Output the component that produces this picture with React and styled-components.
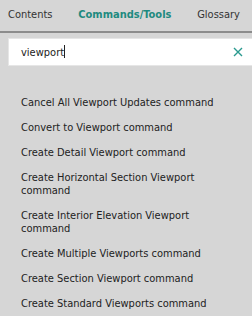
import React from "react";
import styled, { createGlobalStyle } from "styled-components";

const GlobalStyle = createGlobalStyle`
  html, body {
    margin: 0;
    padding: 0;
    background: #d6d6d6;
  }
  body {
    font-family: "DejaVu Sans Condensed", "DejaVu Sans", Verdana, sans-serif;
    overflow: hidden;
  }
`;

const Panel = styled.div`
  width: 252px;
  height: 316px;
  background: #d6d6d6;
  overflow: hidden;
`;

const TabBar = styled.div`
  display: flex;
  align-items: center;
  justify-content: space-between;
  height: 28px;
  padding: 0 12px 3px 8px;
  border-bottom: 2px solid #8c8c8c;
`;

const Tab = styled.div`
  font-size: 11px;
  color: ${(p) => (p.active ? "#1f8a80" : "#333")};
  font-weight: ${(p) => (p.active ? "bold" : "normal")};
`;

const SearchBox = styled.div`
  display: flex;
  align-items: center;
  margin: 5px 0 0 8px;
  height: 26px;
  background: #fff;
  border: 1px solid #e6e6e6;
  border-right: none;
  padding: 0 9px 0 12px;
`;

const SearchText = styled.div`
  flex: 1;
  font-size: 11px;
  color: #222;
`;

const Caret = styled.span`
  display: inline-block;
  width: 1px;
  height: 13px;
  background: #222;
  vertical-align: -2px;
`;

const List = styled.ul`
  list-style: none;
  margin: 0;
  padding: 30px 20px 0 21px;
`;

const Item = styled.li`
  font-size: 11px;
  color: #222;
  line-height: 13px;
  margin-bottom: 12px;
`;

const items = [
  "Cancel All Viewport Updates command",
  "Convert to Viewport command",
  "Create Detail Viewport command",
  "Create Horizontal Section Viewport command",
  "Create Interior Elevation Viewport command",
  "Create Multiple Viewports command",
  "Create Section Viewport command",
  "Create Standard Viewports command",
];

export default function App() {
  return (
    <Panel>
      <GlobalStyle />
      <TabBar>
        <Tab>Contents</Tab>
        <Tab active>Commands/Tools</Tab>
        <Tab>Glossary</Tab>
      </TabBar>
      <SearchBox>
        <SearchText>
          viewport
          <Caret />
        </SearchText>
        <svg width="10" height="10" viewBox="0 0 10 10">
          <path d="M1 1 L9 9 M9 1 L1 9" stroke="#2a9a8f" strokeWidth="1.4" />
        </svg>
      </SearchBox>
      <List>
        {items.map((t) => (
          <Item key={t}>{t}</Item>
        ))}
      </List>
    </Panel>
  );
}
